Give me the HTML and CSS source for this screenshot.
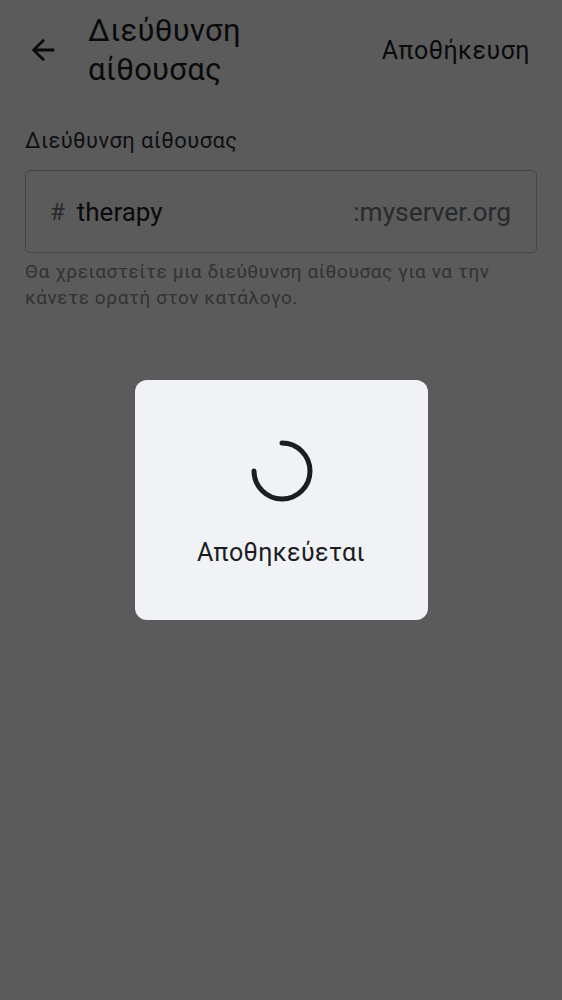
FILE: index.html
```html
<!DOCTYPE html>
<html lang="el">
<head>
<meta charset="utf-8">
<title>Διεύθυνση αίθουσας</title>
<link rel="stylesheet" href="styles.css">
</head>
<body>
<div class="screen">
  <header class="topbar">
    <button class="back" aria-label="Πίσω">
      <svg viewBox="0 0 24 24" width="34" height="34"><path d="M20 11H7.83l5.59-5.59L12 4l-8 8 8 8 1.41-1.41L7.83 13H20v-2z" fill="#1b1d22"/></svg>
    </button>
    <h1 class="title">Διεύθυνση αίθουσας</h1>
    <span class="save">Αποθήκευση</span>
  </header>
  <main class="content">
    <label class="label">Διεύθυνση αίθουσας</label>
    <div class="field">
      <span class="hash">#</span>
      <span class="value">therapy</span>
      <span class="server">:myserver.org</span>
    </div>
    <p class="helper">Θα χρειαστείτε μια διεύθυνση αίθουσας για να την κάνετε ορατή στον κατάλογο.</p>
  </main>
</div>
<div class="scrim">
  <div class="dialog">
    <svg class="spinner" viewBox="0 0 64 64" width="64" height="64"><path d="M32 4 A28 28 0 1 1 4 32" fill="none" stroke="#1b1d22" stroke-width="5" stroke-linecap="round"/></svg>
    <div class="dialog-text">Αποθηκεύεται</div>
  </div>
</div>
</body>
</html>
```
FILE: styles.css
```css
html, body {
  margin: 0;
  padding: 0;
  background: #ffffff;
  font-family: Roboto, "Noto Sans", sans-serif;
  color: #1b1d22;
}
.screen {
  width: 562px;
  min-height: 1000px;
}
.topbar {
  display: flex;
  align-items: center;
  padding: 12px 32px 12px 26px;
  height: 76px;
}
.back {
  border: none;
  background: none;
  padding: 0;
  width: 34px;
  height: 34px;
  display: flex;
  margin-right: 28px;
}
.title {
  margin: 0;
  font-size: 31px;
  line-height: 39px;
  font-weight: 400;
  width: 180px;
  flex: 0 0 auto;
  letter-spacing: 0.3px;
}
.save {
  margin-left: auto;
  font-size: 25px;
  font-weight: 400;
  letter-spacing: 0.5px;
}
.content {
  padding: 26px 25px 0 25px;
  display: flex;
  flex-direction: column;
}
.label {
  font-size: 22px;
  line-height: 30px;
  letter-spacing: 0.4px;
  color: #2c2f35;
}
.field {
  margin-top: 14px;
  height: 81px;
  border: 1px solid #b9bcc2;
  border-radius: 5px;
  display: flex;
  align-items: center;
  padding: 0 25px 0 24px;
}
.hash {
  font-size: 24px;
  color: #707680;
  margin-right: 12px;
}
.value {
  font-size: 26px;
  color: #1b1d22;
}
.server {
  margin-left: auto;
  font-size: 26.3px;
  color: #707680;
}
.helper {
  margin: 6px 0 0 0;
  width: 470px;
  font-size: 19px;
  line-height: 26px;
  letter-spacing: 0.6px;
  color: #8a8e96;
}
.scrim {
  position: fixed;
  inset: 0;
  background: rgba(0, 0, 0, 0.643);
  display: flex;
  align-items: center;
  justify-content: center;
}
.dialog {
  width: 293px;
  height: 240px;
  background: #f0f2f6;
  border-radius: 12px;
  display: flex;
  flex-direction: column;
  align-items: center;
  box-sizing: border-box;
  padding-top: 59px;
}
.spinner {
  display: block;
  margin-left: 1px;
}
.dialog-text {
  margin-top: 35px;
  font-size: 25px;
  letter-spacing: 0.4px;
  color: #1b1d22;
}
```
